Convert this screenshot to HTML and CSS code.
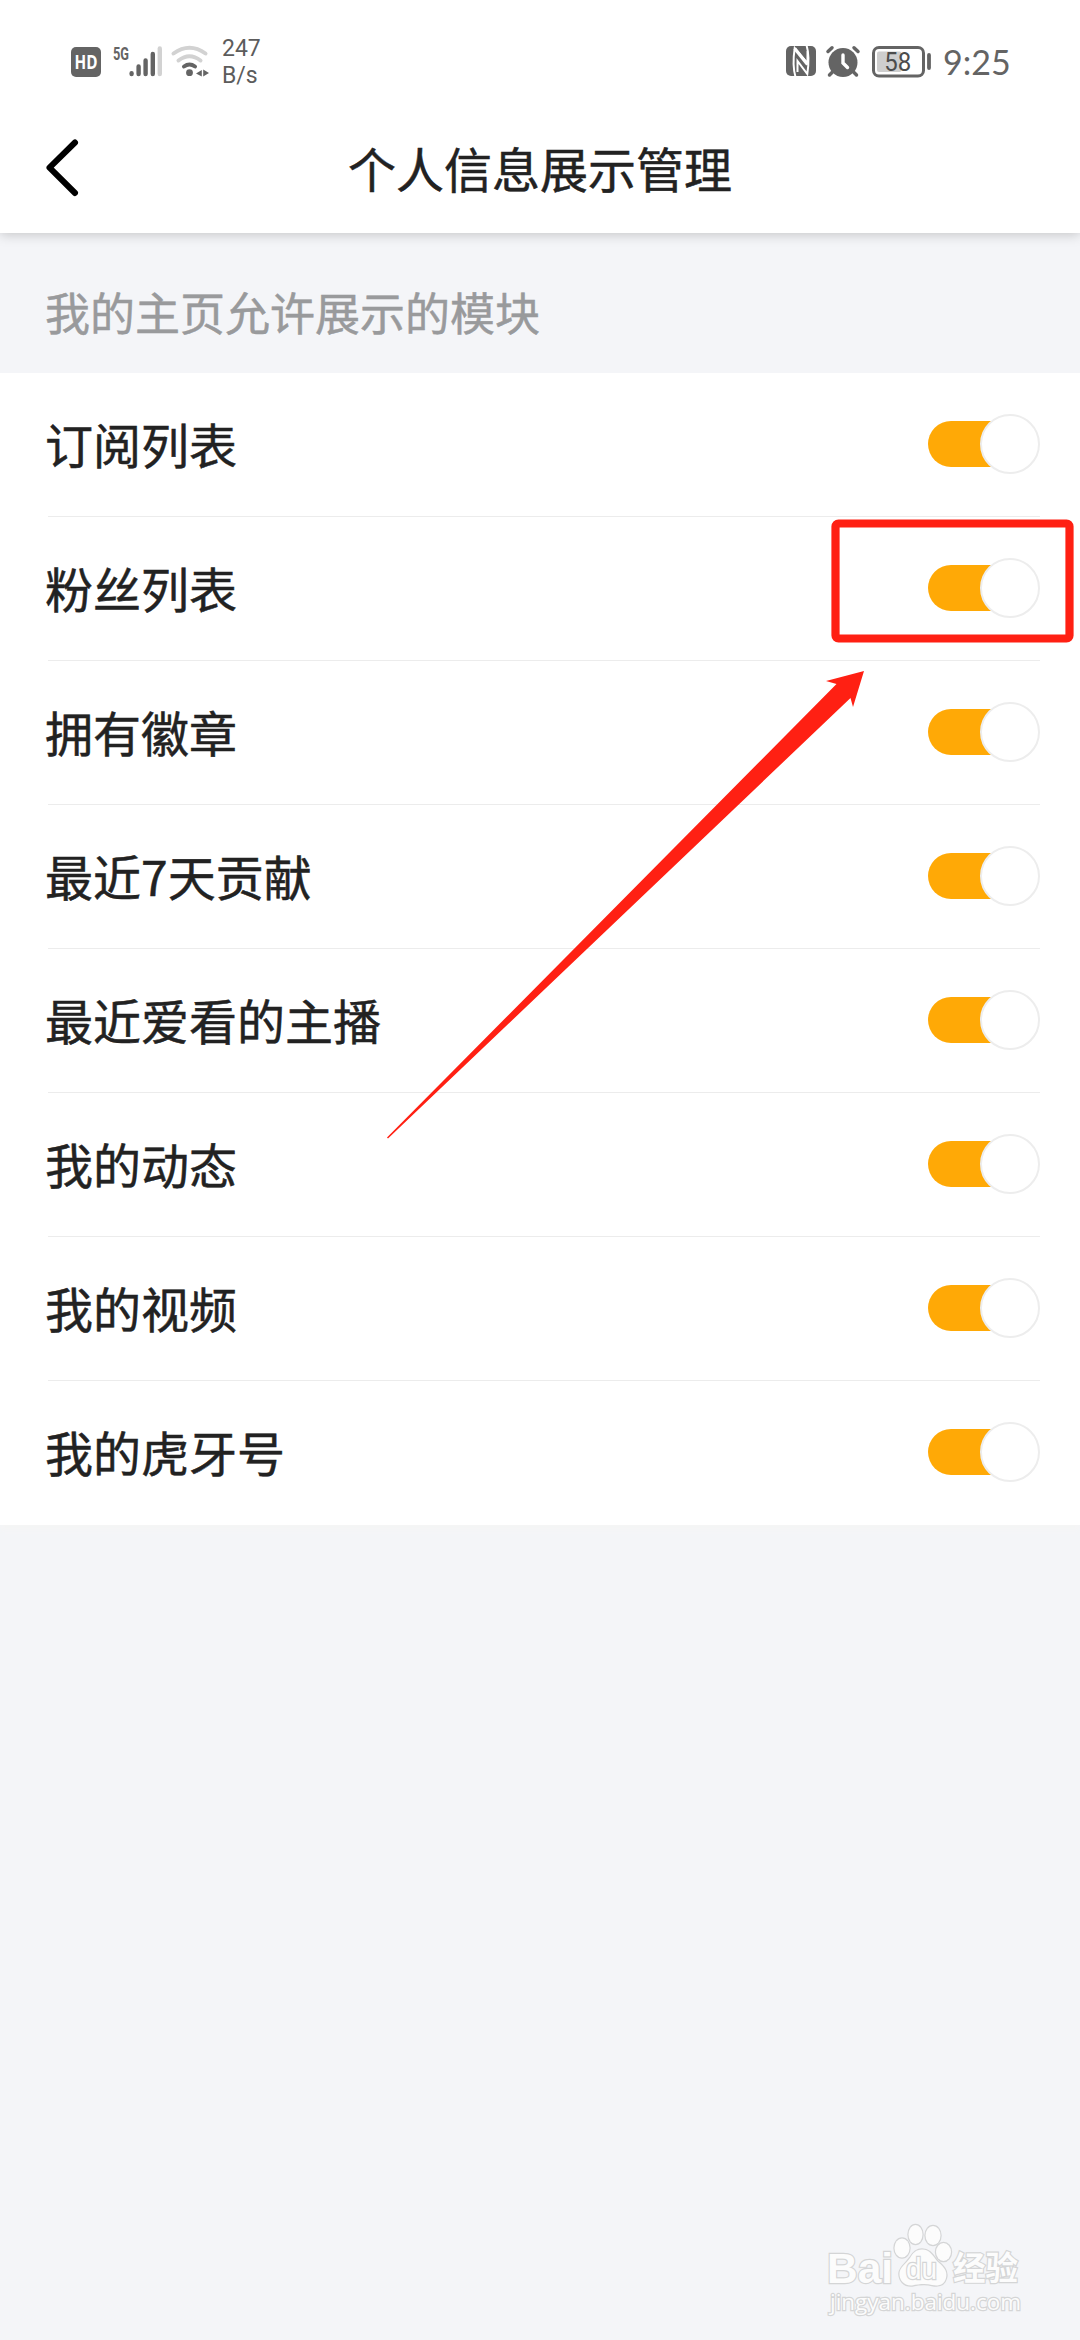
FILE: index.html
```html
<!DOCTYPE html>
<html lang="zh-CN">
<head>
<meta charset="utf-8">
<title>个人信息展示管理</title>
<link rel="stylesheet" href="styles.css">
</head>
<body>
<div class="screen">
  <header class="header">
    <div class="status-bar">
      <div class="status-left">
        <svg class="icon-hd" width="30" height="30" viewBox="0 0 30 30">
          <rect width="30" height="30" rx="5" fill="#646464"/>
          <text x="15" y="22" text-anchor="middle" textLength="23" lengthAdjust="spacingAndGlyphs" class="hd-text">HD</text>
        </svg>
        <svg class="icon-signal" width="50" height="32" viewBox="0 0 50 32">
          <text x="0" y="14" textLength="16" lengthAdjust="spacingAndGlyphs" class="net-text">5G</text>
          <g stroke="#646464" stroke-width="4.4" stroke-linecap="round">
            <path d="M18.6 27.2v.8M25.6 20.5V28M32.6 14.5V28M39.8 8V28"/>
            <path d="M46.8 2.5V28" stroke="#d2d2d2"/>
          </g>
        </svg>
        <svg class="icon-wifi" width="38" height="32" viewBox="0 0 38 32">
          <g fill="none" stroke-width="4" stroke-linecap="round">
            <path d="M2.5 7.500Q18.500-4 34.500 7.500" stroke="#d2d2d2"/>
            <path d="M7.500 14.500Q18.500 6 29.500 14.500" stroke="#d2d2d2"/>
            <path d="M13 20.500Q18.500 16.500 24 20.500" stroke="#646464"/>
          </g>
          <circle cx="18.500" cy="26.700" r="3.400" fill="#646464"/>
          <path d="M25 27.500L30.800 24V30.500ZM32.200 23.500L38 27L32.200 30.500Z" fill="#646464"/>
        </svg>
        <div class="net-speed"><span>247</span><span>B/s</span></div>
      </div>
      <div class="status-right">
        <svg class="icon-nfc" width="30" height="30" viewBox="0 0 30 30">
          <rect width="30" height="30" rx="5" fill="#646464"/>
          <path d="M9.500 31C6.800 22 7.500 10 8.700 2L21.500 17.500V5M20.500-1C23.200 8 22.500 20 21.300 28L11.500 15V26" fill="none" stroke="#fff" stroke-width="2"/>
          <path d="M8.700 2.500L21.500 18.500" stroke="#fff" stroke-width="3.200"/>
        </svg>
        <svg class="icon-alarm" width="34" height="31" viewBox="0 0 34 31">
          <circle cx="17" cy="16.500" r="14.500" fill="#646464"/>
          <path d="M2 5.500L6 1.800M32 5.500L28 1.800M6 26.500L3.500 29M28 26.500L30.500 29" stroke="#646464" stroke-width="3.500" stroke-linecap="round"/>
          <path d="M17 9V17L21.500 21.500" stroke="#fff" stroke-width="3.400" stroke-linecap="round" fill="none"/>
        </svg>
        <svg class="icon-battery" width="60" height="32" viewBox="0 0 60 32">
          <rect x="1.500" y="1.500" width="50" height="28.500" rx="5.500" fill="none" stroke="#646464" stroke-width="3"/>
          <rect x="5" y="5.500" width="24.500" height="20.500" rx="2" fill="#cecece"/>
          <text x="25.800" y="25" text-anchor="middle" textLength="27" lengthAdjust="spacingAndGlyphs" class="battery-text">58</text>
          <path d="M57 9V22" stroke="#646464" stroke-width="3.800" stroke-linecap="round"/>
        </svg>
        <span class="clock">9:25</span>
      </div>
    </div>
    <nav class="nav">
      <svg class="back" width="34" height="60" viewBox="0 0 34 60">
        <path d="M30 4.500L4.500 29.700L30 55" fill="none" stroke="#000" stroke-width="6" stroke-linecap="round" stroke-linejoin="round"/>
      </svg>
      <h1 class="title">个人信息展示管理</h1>
    </nav>
  </header>
  <main>
    <h2 class="section-title">我的主页允许展示的模块</h2>
    <ul class="list">
      <li class="row"><span>订阅列表</span><i class="switch"></i></li>
      <li class="row"><span>粉丝列表</span><i class="switch"></i></li>
      <li class="row"><span>拥有徽章</span><i class="switch"></i></li>
      <li class="row"><span>最近7天贡献</span><i class="switch"></i></li>
      <li class="row"><span>最近爱看的主播</span><i class="switch"></i></li>
      <li class="row"><span>我的动态</span><i class="switch"></i></li>
      <li class="row"><span>我的视频</span><i class="switch"></i></li>
      <li class="row"><span>我的虎牙号</span><i class="switch"></i></li>
    </ul>
  </main>
  <svg class="annotation" width="1080" height="1200" viewBox="0 0 1080 1200">
    <rect x="835.500" y="523.500" width="234" height="115" rx="3" fill="none" stroke="#ff2013" stroke-width="8.200"/>
    <path d="M864 671L826 681L836.500 684L387 1137.500L388 1138.500L850.500 698L853 707Z" fill="#ff2013"/>
  </svg>
  <svg class="watermark" width="200" height="100" viewBox="0 0 200 100">
    <g fill="#fcfcfc" stroke="#d4d5d6" stroke-width="2.400" paint-order="stroke">
      <text x="-1" y="63" textLength="66" lengthAdjust="spacingAndGlyphs" class="wm-brand">Bai</text>
      <ellipse cx="74" cy="28" rx="7.500" ry="9.500"/>
      <ellipse cx="87.500" cy="14.500" rx="7" ry="9.500"/>
      <ellipse cx="105" cy="15.500" rx="7.500" ry="9.500"/>
      <ellipse cx="115.500" cy="32" rx="7.500" ry="9"/>
      <path d="M94 29.500C102 29.500 105 36 109 41C115 46 120 51 118 58C116 66 109 66 104 65C98 63.500 91 64 84 65.500C76 66 71 60 71.500 53C72 47 78 44 82 38C85 33 88 29.500 94 29.500Z"/>
      <text x="78" y="59" textLength="31" lengthAdjust="spacingAndGlyphs" class="wm-du">du</text>
      <text x="125" y="60" textLength="65" lengthAdjust="spacingAndGlyphs" class="wm-cn">经验</text>
      <text x="2" y="90" textLength="191" lengthAdjust="spacingAndGlyphs" class="wm-url">jingyan.baidu.com</text>
    </g>
  </svg>
</div>
</body>
</html>
```
FILE: styles.css
```css
*,
*::after {
  box-sizing: border-box;
}

body {
  margin: 0;
  background: #f4f5f8;
  color: #222;
  font-family: "Noto Sans CJK SC", sans-serif;
}

svg {
  flex: none;
  overflow: visible;
}

.screen {
  position: relative;
  width: 1080px;
  height: 2340px;
  overflow: hidden;
}

.header {
  height: 233px;
  background: #fff;
  box-shadow: 0 1px 12px rgba(0, 0, 0, 0.22);
}

.status-bar {
  display: flex;
  justify-content: space-between;
  height: 108px;
  padding: 0 72px 0 71px;
}

.status-left,
.status-right {
  display: flex;
  align-items: flex-start;
  padding-top: 46px;
}

.icon-hd {
  margin-top: 1px;
}

.icon-signal {
  margin-left: 12px;
}

.icon-wifi {
  margin-left: 8px;
}

.net-speed {
  display: flex;
  flex-direction: column;
  margin: -11px 0 0 13px;
  color: #5c5c5c;
  font: 400 23px/27px Roboto, sans-serif;
}

.icon-alarm {
  margin-left: 10px;
}

.icon-battery {
  margin-left: 12px;
}

.clock {
  width: 65px;
  margin: -4px 0 0 11px;
  color: #646464;
  font: 400 34px/40px Lato, sans-serif;
  white-space: nowrap;
}

.hd-text {
  fill: #fff;
  font: 700 19px "Open Sans", sans-serif;
}

.net-text {
  fill: #646464;
  font: 700 19px Roboto, sans-serif;
}

.battery-text {
  fill: #4c4c4c;
  font: 400 26px Roboto, sans-serif;
}

.nav {
  display: grid;
  grid-template-columns: 34px 1fr 34px;
  align-items: center;
  height: 120px;
  padding: 0 45px;
}

.title {
  margin: 0 0 3px;
  font-size: 48px;
  font-weight: 400;
  line-height: 72px;
  text-align: center;
  -webkit-text-stroke: 0.5px;
}

.section-title {
  height: 140px;
  margin: 0;
  padding: 9px 45px 0;
  color: #999a9c;
  font-size: 45px;
  font-weight: 400;
  line-height: 140px;
  -webkit-text-stroke: 0.5px;
}

.list {
  margin: 0;
  padding: 0 40px 0 0;
  background: #fff;
  box-shadow: 0 5px 5px #f5f5f5;
  list-style: none;
}

.row {
  display: flex;
  align-items: center;
  justify-content: space-between;
  height: 144px;
  margin-left: 48px;
  border-bottom: 1px solid #ececec;
  font-size: 48px;
  -webkit-text-stroke: 0.5px;
}

.row span {
  margin: 0 0 3px -3px;
}

.row:last-child {
  border-bottom-color: #fff;
}

.switch {
  display: flex;
  align-items: center;
  justify-content: flex-end;
  width: 112px;
  height: 46px;
  margin-bottom: 1px;
  border-radius: 23px;
  background: linear-gradient(90deg, #ffa906 80px, transparent 80px);
}

.switch::after {
  content: "";
  flex: none;
  width: 60px;
  height: 60px;
  border: 2px solid #ededed;
  border-radius: 50%;
  background: #fff;
}

.annotation {
  position: absolute;
  top: 0;
  left: 0;
}

.watermark {
  position: absolute;
  top: 2220px;
  left: 828px;
}

.wm-brand {
  font: 700 42px "Liberation Sans", sans-serif;
}

.wm-du {
  font: 400 29px "Liberation Sans", sans-serif;
}

.wm-cn {
  font: 700 33px "Noto Sans CJK SC", sans-serif;
}

.wm-url {
  font: 400 22px "Open Sans", sans-serif;
}
```
